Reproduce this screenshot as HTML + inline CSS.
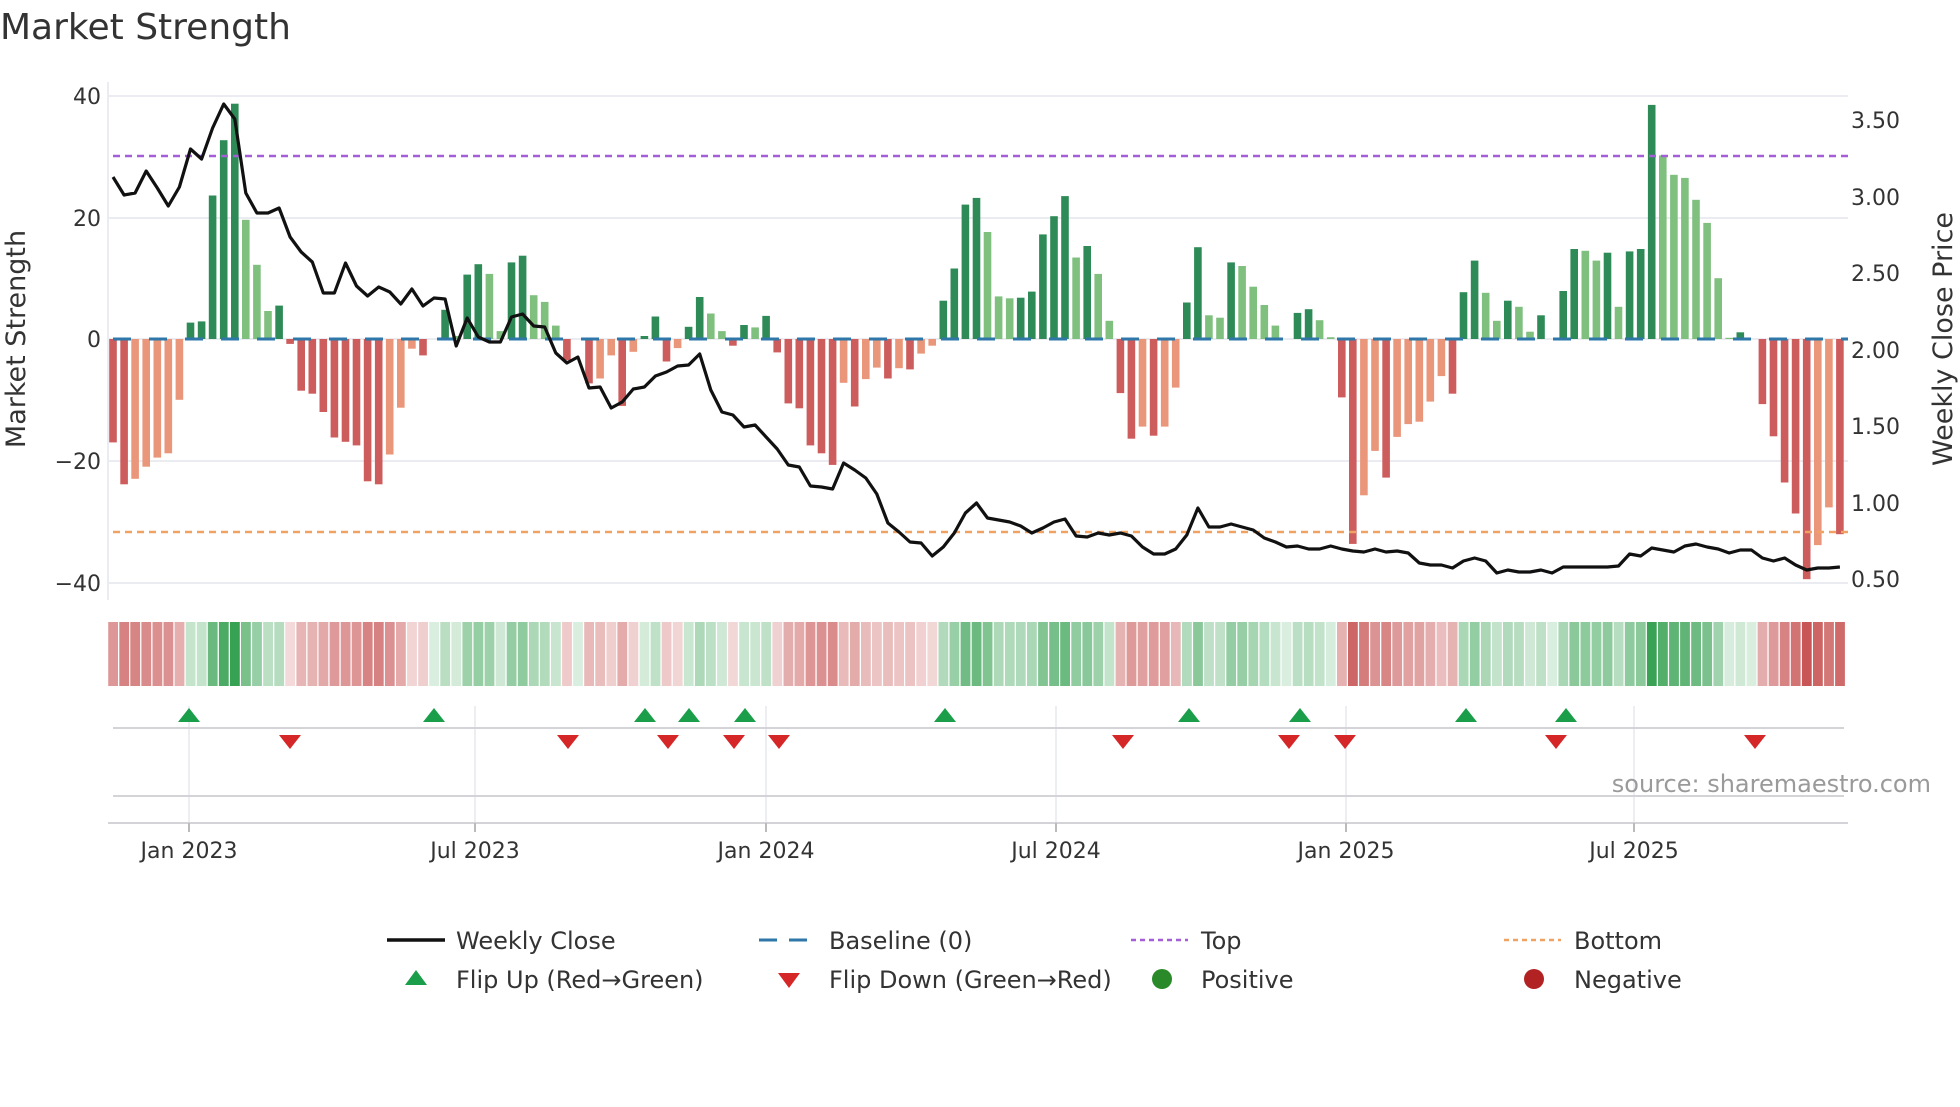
<!DOCTYPE html>
<html><head><meta charset="utf-8">
<style>
html,body{margin:0;padding:0;background:#fff;}
body{width:1960px;height:1102px;overflow:hidden;}
svg text{font-family:"DejaVu Sans","Liberation Sans",sans-serif;fill:#333;}
</style></head>
<body>
<svg id="s" width="1960" height="1102" xmlns="http://www.w3.org/2000/svg">
<text x="0" y="39" font-size="36" fill="#333">Market Strength</text>
<g stroke="#ebebf2" stroke-width="2">
<line x1="108" y1="96" x2="1848" y2="96"/>
<line x1="108" y1="218" x2="1848" y2="218"/>
<line x1="108" y1="339" x2="1848" y2="339"/>
<line x1="108" y1="461" x2="1848" y2="461"/>
<line x1="108" y1="583" x2="1848" y2="583"/>
</g>
<line x1="108" y1="82" x2="108" y2="600" stroke="#ebebf2" stroke-width="2"/>
<g font-size="22" text-anchor="end">
<text x="101" y="104">40</text>
<text x="101" y="226">20</text>
<text x="101" y="347">0</text>
<text x="101" y="469">−20</text>
<text x="101" y="591">−40</text>
</g>
<g font-size="22">
<text x="1851" y="128">3.50</text>
<text x="1851" y="205">3.00</text>
<text x="1851" y="281">2.50</text>
<text x="1851" y="358">2.00</text>
<text x="1851" y="434">1.50</text>
<text x="1851" y="511">1.00</text>
<text x="1851" y="587">0.50</text>
</g>
<text font-size="27" transform="translate(25,339) rotate(-90)" text-anchor="middle">Market Strength</text>
<text font-size="27" transform="translate(1952,339) rotate(-90)" text-anchor="middle">Weekly Close Price</text>
<g id="bars"></g>
<line x1="113" y1="339" x2="1848" y2="339" stroke="#2e77a8" stroke-width="3" stroke-dasharray="18,18"/>
<line x1="113" y1="156" x2="1848" y2="156" stroke="#a45fd8" stroke-width="2.5" stroke-dasharray="7,5"/>
<line x1="113" y1="532" x2="1848" y2="532" stroke="#f0a262" stroke-width="2.5" stroke-dasharray="7,5"/>
<polyline id="price" fill="none" stroke="#111" stroke-width="3.2" stroke-linejoin="round"/>
<g id="heat"></g>
<g stroke="#e6e8ee" stroke-width="1.5">
<line x1="189" y1="706" x2="189" y2="823"/><line x1="475" y1="706" x2="475" y2="823"/>
<line x1="766" y1="706" x2="766" y2="823"/><line x1="1056" y1="706" x2="1056" y2="823"/>
<line x1="1346" y1="706" x2="1346" y2="823"/><line x1="1634" y1="706" x2="1634" y2="823"/>
</g>
<line x1="113" y1="728" x2="1844" y2="728" stroke="#d4d4d8" stroke-width="2"/>
<line x1="113" y1="796" x2="1844" y2="796" stroke="#d4d4d8" stroke-width="2"/>
<line x1="108" y1="823" x2="1848" y2="823" stroke="#d4d4d8" stroke-width="2"/>
<g stroke="#bbb" stroke-width="2">
<line x1="189" y1="823" x2="189" y2="832"/><line x1="475" y1="823" x2="475" y2="832"/>
<line x1="766" y1="823" x2="766" y2="832"/><line x1="1056" y1="823" x2="1056" y2="832"/>
<line x1="1346" y1="823" x2="1346" y2="832"/><line x1="1634" y1="823" x2="1634" y2="832"/>
</g>
<g id="marks"></g>
<text x="1931" y="792" font-size="24" text-anchor="end" style="fill:#9a9a9a">source: sharemaestro.com</text>
<g font-size="22" text-anchor="middle">
<text x="189" y="858">Jan 2023</text><text x="475" y="858">Jul 2023</text>
<text x="766" y="858">Jan 2024</text><text x="1056" y="858">Jul 2024</text>
<text x="1346" y="858">Jan 2025</text><text x="1634" y="858">Jul 2025</text>
</g>
<g font-size="24">
<line x1="387" y1="940" x2="445" y2="940" stroke="#111" stroke-width="3.5"/>
<text x="456" y="949">Weekly Close</text>
<line x1="759" y1="940" x2="815" y2="940" stroke="#2e77a8" stroke-width="3" stroke-dasharray="18,12"/>
<text x="829" y="949">Baseline (0)</text>
<line x1="1131" y1="940" x2="1188" y2="940" stroke="#a45fd8" stroke-width="2.5" stroke-dasharray="5,4"/>
<text x="1201" y="949">Top</text>
<line x1="1504" y1="940" x2="1561" y2="940" stroke="#f0a262" stroke-width="2.5" stroke-dasharray="5,4"/>
<text x="1574" y="949">Bottom</text>
<polygon points="405,985 427,985 416,970" fill="#1a9e4a"/>
<text x="456" y="988">Flip Up (Red→Green)</text>
<polygon points="778,973 800,973 789,988" fill="#d62728"/>
<text x="829" y="988">Flip Down (Green→Red)</text>
<circle cx="1162" cy="979" r="10" fill="#2a8a2a"/>
<text x="1201" y="988">Positive</text>
<circle cx="1534" cy="979" r="10" fill="#b22222"/>
<text x="1574" y="988">Negative</text>
</g>
</svg>
<script>
var V=[[-17,1],[-23.9,1],[-23,0],[-21,0],[-19.5,0],[-18.8,0],[-10,0],[2.7,1],[2.9,1],[23.6,1],[32.7,1],[38.7,1],[19.6,0],[12.2,0],[4.6,0],[5.5,1],[-0.8,1],[-8.5,1],[-9,1],[-12,1],[-16.2,1],[-16.9,1],[-17.5,1],[-23.4,1],[-23.9,1],[-19,0],[-11.3,0],[-1.6,0],[-2.7,1],[0,0],[4.8,1],[0.5,0],[10.6,1],[12.3,1],[10.7,0],[1.3,0],[12.6,1],[13.7,1],[7.2,0],[6.1,0],[2.2,0],[-3.5,1],[0,0],[-7.3,1],[-6.5,0],[-2.7,0],[-11,1],[-2.1,0],[0.5,1],[3.7,1],[-3.7,1],[-1.5,0],[2,1],[6.9,1],[4.2,0],[1.3,0],[-1.1,1],[2.3,1],[1.9,0],[3.8,1],[-2.2,1],[-10.6,1],[-11.4,1],[-17.5,1],[-18.8,1],[-20.7,1],[-7.2,0],[-11.1,1],[-6.6,0],[-4.7,0],[-6.5,1],[-4.8,0],[-5,1],[-2.4,0],[-1.1,0],[6.3,1],[11.6,1],[22.1,1],[23.2,1],[17.6,0],[7,0],[6.7,0],[6.8,1],[7.8,1],[17.2,1],[20.2,1],[23.5,1],[13.4,0],[15.3,1],[10.7,0],[3,0],[-8.9,1],[-16.4,1],[-14.4,0],[-15.9,1],[-14.4,0],[-8,0],[6,1],[15.1,1],[3.9,0],[3.5,0],[12.6,1],[12,0],[8.6,0],[5.6,0],[2.2,0],[0,0],[4.3,1],[4.9,1],[3.1,0],[0.3,0],[-9.6,1],[-33.7,1],[-25.7,0],[-18.4,0],[-22.8,1],[-16.1,0],[-14,0],[-13.6,0],[-10.3,0],[-6.1,0],[-9,1],[7.7,1],[12.9,1],[7.6,0],[3,0],[6.3,1],[5.3,0],[1.2,0],[3.9,1],[0,0],[7.9,1],[14.8,1],[14.5,0],[12.9,0],[14.2,1],[5.3,0],[14.4,1],[14.8,1],[38.5,1],[30.2,0],[27,0],[26.5,0],[22.9,0],[19.1,0],[10,0],[0.2,0],[1.1,1],[0,0],[-10.7,1],[-16,1],[-23.6,1],[-28.7,1],[-39.5,1],[-33.9,0],[-27.7,0],[-32.1,1]];
var P=[177,195,193,171,188,206,187,149,159,128,104,119,193,213,213,208,237,252,262,293,293,263,286,296,287,292,304,289,306,298,299,346,318,337,342,342,317,314,326,327,353,363,357,388,387,408,402,389,387,376,372,366,365,354,390,412,415,427,425,437,449,465,467,486,487,489,463,470,478,494,523,532,542,543,556,547,533,513,503,518,520,522,526,533,528,522,519,536,537,533,535,533,536,547,554,554,549,535,508,527,527,524,527,530,538,542,547,546,549,549,546,549,551,552,549,552,551,553,563,565,565,568,561,558,561,573,570,572,572,570,573,567,567,567,567,567,566,554,556,548,550,552,546,544,547,549,553,550,550,558,561,558,565,570,568,568,567];
var NS="http://www.w3.org/2000/svg",bars=document.getElementById('bars'),heat=document.getElementById('heat');
function el(t,a,p){var e=document.createElementNS(NS,t);for(var k in a)e.setAttribute(k,a[k]);p.appendChild(e);return e;}
function mix(c,a){return 'rgb('+c.map(function(v){return Math.round(255-(255-v)*a)}).join(',')+')';}
var pts=[];
for(var i=0;i<V.length;i++){
 var x=113+11.07*i,v=V[i][0],d=V[i][1];
 if(v!==0){var h=Math.abs(v)*6.08;
  var col=v>0?(d?'#2e8b57':'#80c07f'):(d?'#cd5c5c':'#e9967a');
  el('rect',{x:(x-3.8).toFixed(1),y:(v>0?339-h:339).toFixed(1),width:7.6,height:h.toFixed(1),fill:col},bars);}
 var t=Math.min(Math.abs(v)/40,1),a=0.18+0.82*Math.pow(t,0.75);
 var hc=v>=0?mix([52,160,80],a):mix([200,85,85],a);
 el('rect',{x:(x-4.8).toFixed(1),y:622,width:9.8,height:64,fill:hc},heat);
 pts.push(x.toFixed(1)+','+P[i]);
}
document.getElementById('price').setAttribute('points',pts.join(' '));
var mk=document.getElementById('marks');
[189,434,645,689,745,945,1189,1300,1466,1566].forEach(function(x){el('polygon',{points:(x-11)+',722 '+(x+11)+',722 '+x+',708',fill:'#1a9e4a'},mk);});
[290,568,668,734,779,1123,1289,1345,1556,1755].forEach(function(x){el('polygon',{points:(x-11)+',735 '+(x+11)+',735 '+x+',749',fill:'#d62728'},mk);});
</script>
</body></html>
